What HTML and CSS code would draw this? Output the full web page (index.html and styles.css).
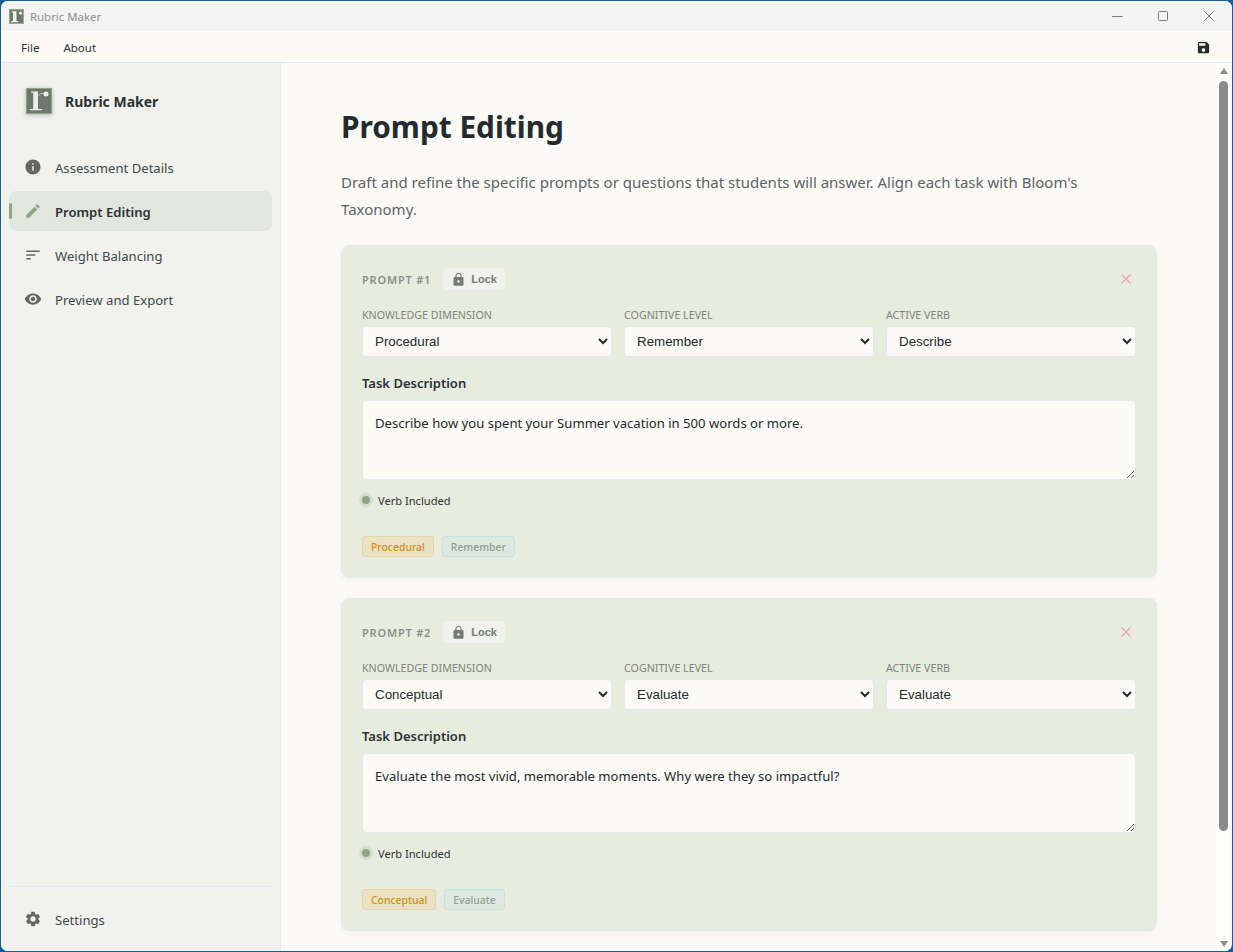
FILE: index.html
```html
<!DOCTYPE html>
<html lang="en">
<head>
<meta charset="utf-8">
<title>Rubric Maker</title>
<link rel="stylesheet" href="styles.css">
</head>
<body>
<div class="window">
  <header class="titlebar">
    <svg class="tb-logo" viewBox="0 0 26 26"><rect x="1" y="1" width="24" height="24" fill="#6f776c" stroke="#9aa892" stroke-width="2"/><path fill="#f4f4f0" d="M5 4h8v17h3v2H4v-2h3V6H5z"/><circle cx="20" cy="7" r="2.8" fill="#f4f4f0"/></svg>
    <span class="tb-title">Rubric Maker</span>
    <div class="tb-controls">
      <svg class="tb-btn" viewBox="0 0 12 12"><path d="M1 6.5h10.5"/></svg>
      <svg class="tb-btn" viewBox="0 0 12 12"><rect x="1.5" y="1.5" width="9" height="9" rx="1"/></svg>
      <svg class="tb-btn" viewBox="0 0 12 12"><path d="M1 1l10 10M11 1L1 11"/></svg>
    </div>
  </header>
  <nav class="menubar">
    <span class="menu-item">File</span>
    <span class="menu-item">About</span>
    <svg class="save-icon" viewBox="0 0 24 24"><path d="M17 3H5c-1.11 0-2 .9-2 2v14c0 1.1.89 2 2 2h14c1.1 0 2-.9 2-2V7l-4-4zm-5 16c-1.66 0-3-1.34-3-3s1.34-3 3-3 3 1.34 3 3-1.34 3-3 3zm3-10H5V5h10v4z"/></svg>
  </nav>
  <div class="body">
    <aside class="sidebar">
      <div class="brand">
        <svg class="brand-logo" viewBox="0 0 26 26"><rect x=".5" y=".5" width="25" height="25" fill="#6f776c" stroke="#93a08b"/><path fill="#eeeeea" d="M5 3.5h7v17.5h4v1.2H4V21h3.2V4.7H5z"/><path fill="none" stroke="#d8d8d4" stroke-width=".8" d="M12 8c1.5-2 3.5-3 6-2.5"/><circle cx="20" cy="6" r="2.5" fill="#eeeeea"/></svg>
        <span class="brand-name">Rubric Maker</span>
      </div>
      <div class="nav">
        <div class="nav-item">
          <svg class="nav-icon" viewBox="0 0 24 24"><path d="M12 2C6.48 2 2 6.48 2 12s4.48 10 10 10 10-4.48 10-10S17.52 2 12 2zm1 15h-2v-6h2v6zm0-8h-2V7h2v2z"/></svg>
          <span>Assessment Details</span>
        </div>
        <div class="nav-item active">
          <svg class="nav-icon" viewBox="0 0 24 24"><path d="M3 17.25V21h3.75L17.81 9.94l-3.75-3.75L3 17.25zM20.71 7.04c.39-.39.39-1.02 0-1.41l-2.34-2.34c-.39-.39-1.02-.39-1.41 0l-1.83 1.83 3.75 3.75 1.83-1.83z"/></svg>
          <span>Prompt Editing</span>
        </div>
        <div class="nav-item">
          <svg class="nav-icon" viewBox="0 0 24 24"><path d="M3 18h6v-2H3v2zM3 6v2h18V6H3zm0 7h12v-2H3v2z"/></svg>
          <span>Weight Balancing</span>
        </div>
        <div class="nav-item">
          <svg class="nav-icon" viewBox="0 0 24 24"><path d="M12 4.5C7 4.5 2.73 7.61 1 12c1.73 4.39 6 7.5 11 7.5s9.27-3.11 11-7.5c-1.73-4.39-6-7.5-11-7.5zM12 17c-2.76 0-5-2.24-5-5s2.24-5 5-5 5 2.24 5 5-2.24 5-5 5zm0-8c-1.66 0-3 1.34-3 3s1.34 3 3 3 3-1.34 3-3-1.34-3-3-3z"/></svg>
          <span>Preview and Export</span>
        </div>
      </div>
      <div class="sidebar-foot">
        <div class="nav-item">
          <svg class="nav-icon" viewBox="0 0 24 24"><path d="M19.14 12.94c.04-.3.06-.61.06-.94 0-.32-.02-.64-.07-.94l2.03-1.58c.18-.14.23-.41.12-.61l-1.92-3.32c-.12-.22-.37-.29-.59-.22l-2.39.96c-.5-.38-1.03-.7-1.62-.94l-.36-2.54c-.04-.24-.24-.41-.48-.41h-3.84c-.24 0-.43.17-.47.41l-.36 2.54c-.59.24-1.13.57-1.62.94l-2.39-.96c-.22-.08-.47 0-.59.22L2.74 8.87c-.12.21-.08.47.12.61l2.03 1.58c-.05.3-.09.63-.09.94s.02.64.07.94l-2.03 1.58c-.18.14-.23.41-.12.61l1.92 3.32c.12.22.37.29.59.22l2.39-.96c.5.38 1.03.7 1.62.94l.36 2.54c.05.24.24.41.48.41h3.84c.24 0 .44-.17.47-.41l.36-2.54c.59-.24 1.13-.56 1.62-.94l2.39.96c.22.08.47 0 .59-.22l1.92-3.32c.12-.22.07-.47-.12-.61l-2.01-1.58zM12 15.6c-1.98 0-3.6-1.62-3.6-3.6s1.62-3.6 3.6-3.6 3.6 1.62 3.6 3.6-1.62 3.6-3.6 3.6z"/></svg>
          <span>Settings</span>
        </div>
      </div>
    </aside>
    <main class="main">
      <div class="content">
        <h1 class="page-title">Prompt Editing</h1>
        <p class="page-desc">Draft and refine the specific prompts or questions that students will answer. Align each task with Bloom's Taxonomy.</p>

        <section class="card">
          <div class="card-head">
            <span class="prompt-num">PROMPT #1</span>
            <span class="lock"><svg class="lock-icon" viewBox="0 0 24 24"><path d="M18 8h-1V6c0-2.76-2.24-5-5-5S7 3.24 7 6v2H6c-1.1 0-2 .9-2 2v10c0 1.1.9 2 2 2h12c1.1 0 2-.9 2-2V10c0-1.1-.9-2-2-2zm-6 9c-1.1 0-2-.9-2-2s.9-2 2-2 2 .9 2 2-.9 2-2 2zm3.1-9H8.9V6c0-1.71 1.39-3.1 3.1-3.1 1.71 0 3.1 1.39 3.1 3.1v2z"/></svg>Lock</span>
            <svg class="close" viewBox="0 0 12 12"><path d="M1.5 1.5l9 9M10.5 1.5l-9 9"/></svg>
          </div>
          <div class="fields">
            <label class="field"><span class="field-label">KNOWLEDGE DIMENSION</span>
              <select class="select"><option>Procedural</option></select></label>
            <label class="field"><span class="field-label">COGNITIVE LEVEL</span>
              <select class="select"><option>Remember</option></select></label>
            <label class="field"><span class="field-label">ACTIVE VERB</span>
              <select class="select"><option>Describe</option></select></label>
          </div>
          <div class="task-label">Task Description</div>
          <textarea class="task">Describe how you spent your Summer vacation in 500 words or more.</textarea>
          <div class="verb"><span class="dot"></span>Verb Included</div>
          <div class="tags"><span class="tag tag-k">Procedural</span><span class="tag tag-c">Remember</span></div>
        </section>

        <section class="card">
          <div class="card-head">
            <span class="prompt-num">PROMPT #2</span>
            <span class="lock"><svg class="lock-icon" viewBox="0 0 24 24"><path d="M18 8h-1V6c0-2.76-2.24-5-5-5S7 3.24 7 6v2H6c-1.1 0-2 .9-2 2v10c0 1.1.9 2 2 2h12c1.1 0 2-.9 2-2V10c0-1.1-.9-2-2-2zm-6 9c-1.1 0-2-.9-2-2s.9-2 2-2 2 .9 2 2-.9 2-2 2zm3.1-9H8.9V6c0-1.71 1.39-3.1 3.1-3.1 1.71 0 3.1 1.39 3.1 3.1v2z"/></svg>Lock</span>
            <svg class="close" viewBox="0 0 12 12"><path d="M1.5 1.5l9 9M10.5 1.5l-9 9"/></svg>
          </div>
          <div class="fields">
            <label class="field"><span class="field-label">KNOWLEDGE DIMENSION</span>
              <select class="select"><option>Conceptual</option></select></label>
            <label class="field"><span class="field-label">COGNITIVE LEVEL</span>
              <select class="select"><option>Evaluate</option></select></label>
            <label class="field"><span class="field-label">ACTIVE VERB</span>
              <select class="select"><option>Evaluate</option></select></label>
          </div>
          <div class="task-label">Task Description</div>
          <textarea class="task">Evaluate the most vivid, memorable moments. Why were they so impactful?</textarea>
          <div class="verb"><span class="dot"></span>Verb Included</div>
          <div class="tags"><span class="tag tag-k">Conceptual</span><span class="tag tag-c">Evaluate</span></div>
        </section>
      </div>
      <div class="scrollbar">
        <span class="arrow-up"></span>
        <span class="thumb"></span>
        <span class="arrow-down"></span>
      </div>
    </main>
  </div>
</div>
</body>
</html>
```

FILE: styles.css
```css
* { box-sizing: border-box; }
html, body { margin: 0; height: 100%; overflow: hidden; }
body { background: #1a5c96; font-family: "Noto Sans", sans-serif; color: #2a3335; }

.window {
  height: 950px;
  margin: 1px 1px 0 1px;
  border-radius: 7px;
  overflow: hidden;
  display: flex;
  flex-direction: column;
  background: #fbfaf6;
}

.titlebar {
  height: 30px;
  flex: none;
  display: flex;
  align-items: center;
  background: #f3f3f3;
  padding-left: 8px;
}
.tb-logo { width: 15px; height: 15px; flex: none; }
.tb-title { margin-left: 6px; font-size: 11.4px; color: #8f8f8f; }
.tb-controls { margin-left: auto; display: flex; align-items: center; }
.tb-btn {
  width: 46px;
  height: 12px;
  fill: none;
  stroke: #7d7d7d;
  stroke-width: 1;
}

.menubar {
  height: 32px;
  flex: none;
  display: flex;
  align-items: center;
  padding: 2px 21px 0 20px;
  gap: 24px;
  background: #fbfaf6;
  border-bottom: 1px solid #e2e8f0;
}
.menu-item { font-size: 11.5px; color: #2a3335; }
.save-icon { margin-left: auto; width: 15px; height: 15px; fill: #232b2d; }

.body { flex: 1; min-height: 0; display: flex; }

.sidebar {
  width: 280px;
  flex: none;
  display: flex;
  flex-direction: column;
  padding: 0 8px;
  background: #f1f1ed;
  border-right: 1px solid #e2e8f0;
}
.brand { display: flex; align-items: center; gap: 13px; padding-left: 17px; height: 76px; flex: none; }
.brand-logo { width: 26px; height: 26px; flex: none; filter: drop-shadow(0 1px 2px rgba(0,0,0,.25)); }
.brand-name { font-size: 14px; font-weight: 700; color: #2a3335; }

.nav { display: flex; flex-direction: column; gap: 4px; margin-top: 8px; flex: 1; }
.nav-item {
  position: relative;
  height: 40px;
  display: flex;
  align-items: center;
  gap: 13px;
  padding: 2px 0 0 15px;
  border-radius: 8px;
  font-size: 13.1px;
  color: #3f4a4c;
}
.nav-icon { width: 18px; height: 18px; fill: #666; flex: none; margin-top: -2px; }
.nav-item.active { background: #e3e5df; font-weight: 600; color: #2a3335; width: 263px; }
.nav-item.active .nav-icon { fill: #8fa584; }
.nav-item.active::before {
  content: "";
  position: absolute;
  left: 0;
  top: 12px;
  width: 3px;
  height: 16px;
  border-radius: 2px;
  background: #8fa584;
}
.sidebar-foot { width: 263px; border-top: 1px solid #e2e8f0; height: 65px; padding-top: 12px; flex: none; }

.main { flex: 1; min-width: 0; display: flex; }
.content { flex: 1; min-width: 0; padding: 39px 59px 0 60px; overflow: hidden; }
.page-title { margin: 0; font-size: 29.8px; line-height: 50px; font-weight: 700; color: #222b2d; }
.page-desc { margin: 17px 0 22px; max-width: 790px; font-size: 15px; line-height: 27px; color: #5c6567; }

.card {
  height: 333px;
  margin-bottom: 20px;
  padding: 20px;
  background: #e8ecdf;
  border: 1px solid #e2e8f0;
  border-radius: 8px;
  box-shadow: 0 2px 6px rgba(0,0,0,.04);
}
.card-head { display: flex; align-items: center; height: 24px; margin-top: 1px; }
.prompt-num { font-size: 11px; font-weight: 600; letter-spacing: .8px; color: #8a9089; }
.lock {
  display: inline-flex;
  align-items: center;
  gap: 5px;
  margin-left: 12px;
  height: 22px;
  padding: 0 8px;
  border-radius: 3px;
  background: #f1f2ec;
  font: 700 11px "Liberation Sans", sans-serif;
  color: #757b74;
}
.lock-icon { width: 15px; height: 15px; fill: #757b74; }
.close { margin-left: auto; margin-right: 4px; width: 12px; height: 12px; fill: none; stroke: #e8a6a0; stroke-width: 1.2; }

.fields { display: grid; grid-template-columns: repeat(3, 1fr); gap: 12px; margin-top: 17px; }
.field { display: flex; flex-direction: column; min-width: 0; }
.field-label { font-size: 10.7px; line-height: 14px; color: #7f857d; margin-bottom: 4px; }
.select {
  height: 31px;
  padding: 0 8px;
  font: 13.33px "Liberation Sans", sans-serif;
  color: #222b2d;
  background: #fbfaf6;
  border: 1px solid #e2e8f0;
  border-radius: 4px;
}

.task-label { margin-top: 17px; font-size: 13px; line-height: 18px; font-weight: 600; color: #2a3335; }
.task {
  display: block;
  width: 100%;
  height: 80px;
  margin-top: 8px;
  padding: 12px;
  font: 13.1px/20px "Noto Sans", sans-serif;
  color: #222b2d;
  background: #fbfaf6;
  border: 1px solid #e2e8f0;
  border-radius: 4px;
}

.verb { display: flex; align-items: center; gap: 8px; margin-top: 12px; height: 16px; font-size: 11.1px; color: #2a3335; }
.dot {
  width: 8px;
  height: 8px;
  border-radius: 50%;
  background: #8fa584;
  box-shadow: 0 0 0 3px rgba(143,165,132,.2);
}

.tags { display: flex; gap: 8px; margin-top: 28px; }
.tag { height: 21px; padding: 0 8px; border-radius: 3px; font-size: 10.4px; line-height: 20px; font-weight: 500; border: 1px solid; }
.tag-k { color: #cf8f14; background: #ebe2c4; border-color: #e3d5a8; }
.tag-c { color: #8fa08e; background: #dce8e0; border-color: #c3e2e2; }

.scrollbar {
  width: 15px;
  flex: none;
  margin-right: 1px;
  display: flex;
  flex-direction: column;
  align-items: center;
  padding-top: 5px;
  background: #fdfdfc;
}
.arrow-up { width: 0; height: 0; border: 4.5px solid transparent; border-top: 0; border-bottom: 6px solid #8c8c8c; }
.thumb { width: 9px; height: 750px; margin-top: 7px; border-radius: 5px; background: #8c8c8c; }
.arrow-down { margin-top: auto; margin-bottom: 4px; width: 0; height: 0; border: 4.5px solid transparent; border-bottom: 0; border-top: 6px solid #8c8c8c; }
```
